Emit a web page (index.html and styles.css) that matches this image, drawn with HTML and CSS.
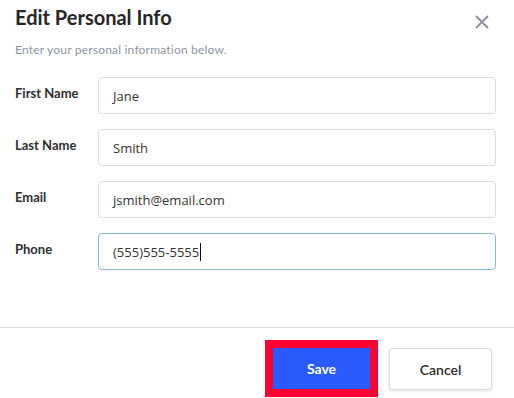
FILE: index.html
```html
<!DOCTYPE html>
<html lang="en">
<head>
    <meta charset="UTF-8">
    <meta name="viewport" content="width=device-width, initial-scale=1.0">
    <title>Edit Personal Info</title>
    <link rel="stylesheet" href="styles.css">
</head>
<body>

    <div class="modal">
        <div class="modal-header">
            <div>
                <h1 class="modal-title">Edit Personal Info</h1>
                <p class="modal-subtitle">Enter your personal information below.</p>
            </div>
            <button class="close-btn" aria-label="Close">
                <svg width="14" height="14" viewBox="0 0 14 14"><path d="M1 1 L13 13 M13 1 L1 13" stroke="#8a909b" stroke-width="1.8" fill="none"/></svg>
            </button>
        </div>

        <form class="modal-body">
            <div class="field">
                <label class="field-label">First Name</label>
                <div class="field-input">Jane</div>
            </div>
            <div class="field">
                <label class="field-label">Last Name</label>
                <div class="field-input">Smith</div>
            </div>
            <div class="field">
                <label class="field-label">Email</label>
                <div class="field-input">jsmith@email.com</div>
            </div>
            <div class="field">
                <label class="field-label">Phone</label>
                <div class="field-input focused">(555)555-5555<span class="caret"></span></div>
            </div>
        </form>

        <div class="modal-footer">
            <button class="btn btn-primary">Save</button>
            <button class="btn btn-secondary">Cancel</button>
        </div>
    </div>

</body>
</html>
```

FILE: styles.css
```css
* {
    margin: 0;
    padding: 0;
    box-sizing: border-box;
}

body {
    font-family: "Lato", "Open Sans", sans-serif;
    background-color: #ffffff;
    color: #2b2b2b;
}

.modal {
    display: flex;
    flex-direction: column;
    height: 100vh;
}

.modal-header {
    display: flex;
    justify-content: space-between;
    align-items: flex-start;
    padding: 2px 25px 0 15px;
}

.modal-title {
    font-size: 20px;
    font-weight: 700;
    line-height: 30px;
    color: #262626;
}

.modal-subtitle {
    font-size: 12px;
    line-height: 15px;
    letter-spacing: 0.2px;
    color: #8d95a3;
    margin-top: 10px;
}

.close-btn {
    border: none;
    background: none;
    margin-top: 13px;
    cursor: pointer;
}

.close-btn svg {
    display: block;
}

.modal-body {
    flex: 1;
    display: flex;
    flex-direction: column;
    gap: 15px;
    padding: 20px 18px 0 15px;
}

.field {
    display: flex;
    align-items: flex-start;
}

.field-label {
    width: 83px;
    font-size: 13px;
    font-weight: 700;
    color: #2e2e2e;
    padding-top: 8px;
}

.field-input {
    flex: 1;
    height: 37px;
    border: 1px solid #dcdcdc;
    border-radius: 4px;
    padding: 0 14px;
    display: flex;
    align-items: center;
    font-family: "Open Sans", sans-serif;
    font-size: 13px;
    color: #333333;
}

.field-input.focused {
    border-color: #8ab4dd;
}

.caret {
    display: inline-block;
    width: 1px;
    height: 18px;
    background-color: #111111;
    margin-left: 1px;
}

.modal-footer {
    display: flex;
    justify-content: flex-end;
    gap: 19px;
    border-top: 1px solid #dddddd;
    padding: 20px 22px 8px;
}

.btn {
    height: 41px;
    border-radius: 4px;
    font-family: "Lato", sans-serif;
    cursor: pointer;
}

.btn-primary {
    width: 97px;
    border: none;
    border-radius: 0;
    background-color: #2a5bff;
    color: #ffffff;
    font-size: 14px;
    font-weight: 700;
    outline: 8px solid #ff0033;
}

.btn-secondary {
    width: 103px;
    height: 42px;
    border: 1px solid #dddddd;
    background-color: #ffffff;
    color: #2b2b2b;
    font-size: 14px;
    font-weight: 600;
    box-shadow: 0 1px 3px rgba(0, 0, 0, 0.12);
}
```
